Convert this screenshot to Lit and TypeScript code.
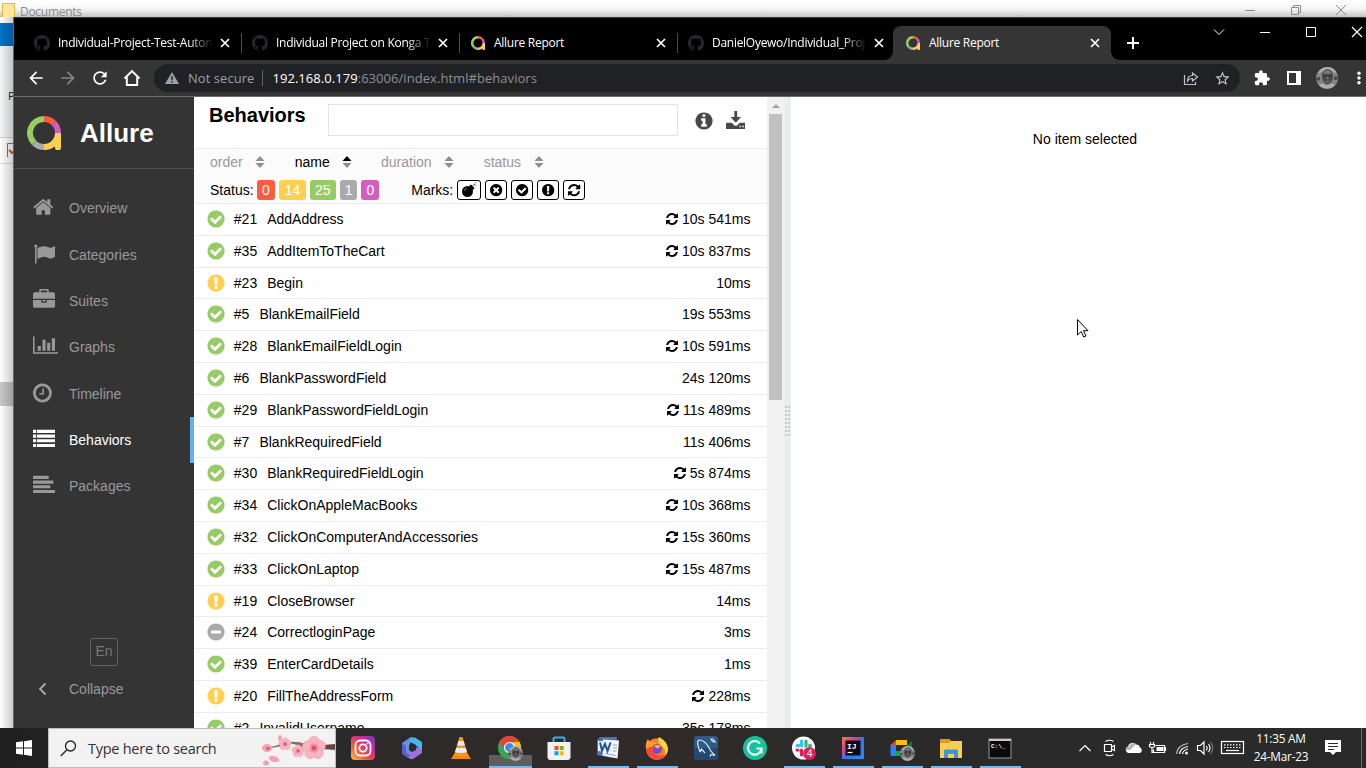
import { LitElement, html, svg, css, nothing } from "lit";
import { customElement } from "lit/decorators.js";
import { classMap } from "lit/directives/class-map.js";

const DISC =
  "M896 128q209 0 385.5 103t279.5 279.5 103 385.5-103 385.5-279.5 279.5-385.5 103-385.5-103-279.5-279.5-103-385.5 103-385.5 279.5-279.5 385.5-103z";

const glyphs: Record<string, string> = {
  home: "M1472 992v480q0 26-19 45t-45 19h-384v-384h-256v384h-384q-26 0-45-19t-19-45v-480q0-1 .5-3t.5-3l575-474 575 474q1 2 1 6zm223-69l-62 74q-8 9-21 11h-3q-13 0-21-7l-692-577-692 577q-12 8-24 7-13-2-21-11l-62-74q-8-10-7-23.5t11-21.5l719-599q32-26 76-26t76 26l244 204v-195q0-14 9-23t23-9h192q14 0 23 9t9 23v408l219 182q10 8 11 21.5t-7 23.5z",
  flag: "M320 256q0 72-64 110v1266q0 13-9.5 22.5t-22.5 9.5h-64q-13 0-22.5-9.5t-9.5-22.5v-1266q-64-38-64-110 0-53 37.5-90.5t90.5-37.5 90.5 37.5 37.5 90.5zm1472 64v763q0 25-12.5 38.5t-39.5 27.5q-215 116-369 116-61 0-123.5-22t-108.5-48-115.5-48-142.5-22q-192 0-464 146-17 9-33 9-26 0-45-19t-19-45v-742q0-32 31-55 21-14 79-43 236-120 421-120 107 0 200 29t219 88q38 19 88 19 54 0 117.5-21t110-47 88-47 54.5-21q26 0 45 19t19 45z",
  briefcase:
    "M640 256h512v-128h-512v128zm1152 640v480q0 66-47 113t-113 47h-1472q-66 0-113-47t-47-113v-480h672v160q0 26 19 45t45 19h320q26 0 45-19t19-45v-160h672zm-768 0v128h-256v-128h256zm768-480v384h-1792v-384q0-66 47-113t113-47h352v-160q0-40 28-68t68-28h576q40 0 68 28t28 68v160h352q66 0 113 47t47 113z",
  chart:
    "M0 128h128v1280h1920v128h-2048zM640 896v384h-256v-384zM1024 384v896h-256v-896zM1408 640v640h-256v-640zM1792 256v1024h-256v-1024z",
  clock:
    "M1024 544v448q0 14-9 23t-23 9h-320q-14 0-23-9t-9-23v-64q0-14 9-23t23-9h224v-352q0-14 9-23t23-9h64q14 0 23 9t9 23zm416 352q0-148-73-273t-198-198-273-73-273 73-198 198-73 273 73 273 198 198 273 73 273-73 198-198 73-273zm224 0q0 209-103 385.5t-279.5 279.5-385.5 103-385.5-103-279.5-279.5-103-385.5 103-385.5 279.5-279.5 385.5-103 385.5 103 279.5 279.5 103 385.5z",
  list: "M0 144h256v256h-256zM320 144h1472v256h-1472zM0 528h256v256h-256zM320 528h1472v256h-1472zM0 912h256v256h-256zM320 912h1472v256h-1472zM0 1296h256v256h-256zM320 1296h1472v256h-1472z",
  align:
    "M30 144h1220q30 0 30 30v196q0 30-30 30h-1220q-30 0-30-30v-196q0-30 30-30zM30 528h1600q30 0 30 30v196q0 30-30 30h-1600q-30 0-30-30v-196q0-30 30-30zM30 912h1350q30 0 30 30v196q0 30-30 30h-1350q-30 0-30-30v-196q0-30 30-30zM30 1296h1730q30 0 30 30v196q0 30-30 30h-1730q-30 0-30-30v-196q0-30 30-30z",
  check:
    "M1412 734q0-28-18-46l-91-90q-19-19-45-19t-45 19l-408 407-226-226q-19-19-45-19t-45 19l-91 90q-18 18-18 46 0 27 18 45l362 362q19 19 45 19 27 0 46-19l543-543q18-18 18-45z" +
    DISC,
  warn:
    DISC +
    "m128 1247v-190q0-14-9-23.5t-22-9.5h-192q-13 0-23 10t-10 23v190q0 13 10 23t23 10h192q13 0 22-9.5t9-23.5zm-2-344l18-621q0-12-10-18-10-8-24-8h-220q-14 0-24 8-10 6-10 18l17 621q0 10 10 17.5t24 7.5h185q14 0 23.5-7.5t10.5-17.5z",
  minus: DISC + "M512 768q-64 0-64 64v128q0 64 64 64h768q64 0 64-64v-128q0-64-64-64z",
  times:
    "M1277 1122q0-26-19-45l-181-181 181-181q19-19 19-45 0-27-19-46l-90-90q-19-19-46-19-26 0-45 19l-181 181-181-181q-19-19-45-19-27 0-46 19l-90 90q-19 19-19 46 0 26 19 45l181 181-181 181q-19 19-19 45 0 27 19 46l90 90q19 19 46 19 26 0 45-19l181-181 181 181q19 19 45 19 27 0 46-19l90-90q19-19 19-46z" +
    DISC,
  info:
    "M1152 1376v-160q0-14-9-23t-23-9h-96v-512q0-14-9-23t-23-9h-320q-14 0-23 9t-9 23v160q0 14 9 23t23 9h96v320h-96q-14 0-23 9t-9 23v160q0 14 9 23t23 9h448q14 0 23-9t9-23zm-128-896v-160q0-14-9-23t-23-9h-192q-14 0-23 9t-9 23v160q0 14 9 23t23 9h192q14 0 23-9t9-23z" +
    DISC,
  retry:
    "M1639 1056q0 5-1 7-64 268-268 434.5t-478 166.5q-146 0-282.5-55t-243.5-157l-129 129q-19 19-45 19t-45-19-19-45v-448q0-26 19-45t45-19h448q26 0 45 19t19 45-19 45l-137 137q71 66 161 102t187 36q134 0 250-65t186-179q11-17 53-117 8-23 30-23h192q13 0 22.5 9.5t9.5 22.5zm25-800v448q0 26-19 45t-45 19h-448q-26 0-45-19t-19-45 19-45l138-138q-148-137-349-137-134 0-250 65t-186 179q-11 17-53 117-8 23-30 23h-199q-13 0-22.5-9.5t-9.5-22.5v-7q65-268 270-434.5t480-166.5q146 0 284 55.5t245 156.5l130-129q19-19 45-19t45 19 19 45z",
  download:
    "M768 0h256v560h300q50 0 15 45l-400 420q-43 40-86 0l-400-420q-35-45 15-45h300zM64 1090h460l230 210q142 110 284 0l230-210h460q64 0 64 64v446q0 64-64 64h-1664q-64 0-64-64v-446q0-64 64-64zM1240 1360v130h130v-130zM1500 1360v130h130v-130z",
};

const fa = (name: string, size: number, w = 1792, x = 0) =>
  html`<svg width=${(size * w) / 1792} height=${size} viewBox="${x} 0 ${w} 1792">
    <path fill="currentColor" fill-rule="evenodd" d=${glyphs[name]}></path>
  </svg>`;

const allureLogo = (size: number) => html`<svg width=${size} height=${size} viewBox="0 0 34 34" fill="none" stroke-width="6">
  <path stroke="#97cc64" d="M7.1 26.9A14 14 0 0 1 17 3"></path>
  <path stroke="#fd5a3e" d="M17 3A14 14 0 0 1 26.9 7.1"></path>
  <path stroke="#d35ebe" d="M26.9 7.1A14 14 0 0 1 31 17"></path>
  <path stroke="#aaa" d="M17 31A14 14 0 0 1 7.1 26.9"></path>
  <path fill="#ffd050" stroke="none" d="M28 17h6v14.500a2.500 2.500 0 0 1-6 0v-1A17 17 0 0 1 17 34v-6A11 11 0 0 0 28 17z"></path>
</svg>`;

const githubMark = html`<svg width="16" height="16" viewBox="0 0 16 16"><path fill="#24292f" d="M8 0C3.58 0 0 3.58 0 8c0 3.54 2.29 6.53 5.47 7.59.4.07.55-.17.55-.38 0-.19-.01-.82-.01-1.49-2.01.37-2.53-.49-2.69-.94-.09-.23-.48-.94-.82-1.13-.28-.15-.68-.52-.01-.53.63-.01 1.08.58 1.23.82.72 1.21 1.87.87 2.33.66.07-.52.28-.87.51-1.07-1.78-.2-3.64-.89-3.64-3.95 0-.87.31-1.59.82-2.15-.08-.2-.36-1.02.08-2.12 0 0 .67-.21 2.2.82.64-.18 1.32-.27 2-.27.68 0 1.36.09 2 .27 1.53-1.04 2.2-.82 2.2-.82.44 1.1.16 1.92.08 2.12.51.56.82 1.27.82 2.15 0 3.07-1.87 3.75-3.65 3.95.29.25.54.73.54 1.48 0 1.07-.01 1.93-.01 2.2 0 .21.15.46.55.38A8.013 8.013 0 0016 8c0-4.42-3.58-8-8-8z"></path></svg>`;

/* Monochrome portrait, drawn in a 22-unit circle. */
const face = (x: number, y: number, d: number) => svg`<svg x=${x} y=${y} width=${d} height=${d} viewBox="0 0 22 22">
  <circle cx="11" cy="11" r="11" fill="#858585"></circle>
  <path d="M2 6Q6 0 12 0q7 1 9 7l-3-2-3-2-7 0-4 3z" fill="#b5b5b5"></path>
  <ellipse cx="11.500" cy="9.500" rx="5.500" ry="7.500" fill="#4a4a4a"></ellipse>
  <path d="M8 4.500q3-3 7 0v2.500H8z" fill="#777"></path>
  <path d="M8 8.500h3v1H8zM12.500 8.500h3v1h-3z" fill="#222"></path>
  <path d="M10.500 10h2v2h-2zM9.500 14h4v1h-4z" fill="#777"></path>
  <path d="M3 18q4-3 8 1 4-4 8-1a11 11 0 0 1-16 0z" fill="#b0b0b0"></path>
  <path d="M0 11l4-1v3l-3 1zM18 9l4 1-1 3-3 0z" fill="#4a4a4a"></path>
</svg>`;

const mat = (d: string, size = 20, fill = "#fff") =>
  html`<svg width=${size} height=${size} viewBox="0 0 24 24"><path fill=${fill} d=${d}></path></svg>`;

const tabs = [
  { title: "Individual-Project-Test-Auton", icon: "gh" },
  { title: "Individual Project on Konga T", icon: "gh" },
  { title: "Allure Report", icon: "al" },
  { title: "DanielOyewo/Individual_Proj", icon: "gh" },
  { title: "Allure Report", icon: "al", active: true },
];

@customElement("browser-chrome")
class BrowserChrome extends LitElement {
  static styles = css`
    :host { display: block; font-family: "Open Sans", "Noto Sans", sans-serif; }
    svg { display: block; flex: none; }
    .strip { height: 43px; background: #000; display: flex; padding: 8px 0 0 10px; box-sizing: border-box; border-top: 1px solid #3b3b3b; }
    .tab { width: 218px; flex: none; box-sizing: border-box; padding: 0 9px 0 10px; display: flex; align-items: center; gap: 8px; color: #fff; position: relative; border-right: 1px solid transparent; }
    .tab.line::after { content: ""; position: absolute; right: -1px; top: 7px; height: 20px; width: 1px; background: #4b4b4b; }
    .tab.active { background: #353535; border-radius: 8px 8px 0 0; margin-left: -3px; padding: 0 8px 0 12px; }
    .tab.active::before, .tab.active::after { content: ""; position: absolute; bottom: 0; width: 8px; height: 8px; }
    .tab.active::before { left: -8px; background: radial-gradient(circle at 0 0, transparent 7.5px, #353535 8px); }
    .tab.active::after { right: -9px; background: radial-gradient(circle at 100% 0, transparent 7.5px, #353535 8px); }
    .title { flex: 1; min-width: 0; font-size: 12px; letter-spacing: -0.28px; white-space: nowrap; line-height: 20px; margin-right: -3px; }
    .title.fade { -webkit-mask-image: linear-gradient(90deg, #000 84%, transparent); mask-image: linear-gradient(90deg, #000 84%, transparent); }
    .plus { padding: 10px 0 0 15px; }
    .win { margin-left: auto; display: flex; gap: 34px; padding: 0 3px 0 0; }
    .bar { height: 36px; background: #353535; display: flex; align-items: center; padding-left: 12px; box-sizing: border-box; }
    .nav { display: flex; gap: 12px; }
    .omni { width: 1086px; flex: none; height: 28px; border-radius: 14px; background: #202124; margin-left: 12px; box-sizing: border-box; padding: 0 9px 0 11px; display: flex; align-items: center; color: #9aa0a6; font-size: 13px; white-space: nowrap; }
    .secure { margin-left: 9px; letter-spacing: 0.05px; }
    .sep { width: 1px; height: 16px; background: #5f6368; margin: 0 9px 0 8px; }
    .host { color: #fff; }
    .url { letter-spacing: 0.05px; flex: 1; color: #8c8f93; }
    .acts { display: flex; gap: 14px; align-items: center; }
    .right { display: flex; gap: 12px; align-items: center; padding-left: 12px; margin-right: -4px; }
    .edge { height: 1px; background: #6a6a6a; }
  `;
  render() {
    return html`
      <div class="strip">
        ${tabs.map(
          (t, i) => html`<div class=${classMap({ tab: true, active: !!t.active, line: i < 3 })}>
            ${t.icon === "gh" ? githubMark : html`<svg width="16" height="16" viewBox="0 0 16 16"><svg x="1" y="1" width="14" height="14">${allureLogo(14)}</svg></svg>`}
            <span class=${classMap({ title: true, fade: t.icon === "gh" })}>${t.title}</span>
            <svg width="14" height="14" viewBox="0 0 14 14"><path d="M3 3l8 8M11 3l-8 8" stroke="#fff" stroke-width="1.700"></path></svg>
          </div>`
        )}
        <div class="plus"><svg width="14" height="14" viewBox="0 0 14 14"><path d="M7 1v12M1 7h12" stroke="#fff" stroke-width="2"></path></svg></div>
        <div class="win">
          <svg width="12" height="12" viewBox="0 0 12 12"><path d="M1 3.500l5 5 5-5" stroke="#fff" fill="none"></path></svg>
          <svg width="12" height="12" viewBox="0 0 12 12"><path d="M1 6.500h10" stroke="#fff"></path></svg>
          <svg width="12" height="12" viewBox="0 0 12 12"><path d="M1.500 1.500h9v9h-9z" stroke="#fff" fill="none"></path></svg>
          <svg width="12" height="12" viewBox="0 0 12 12"><path d="M1 1l10 10M11 1L1 11" stroke="#fff" stroke-width="1.200"></path></svg>
        </div>
      </div>
      <div class="bar">
        <div class="nav">
          ${mat("M20 11H7.83l5.59-5.59L12 4l-8 8 8 8 1.41-1.41L7.83 13H20v-2z")}
          ${mat("M4 11h12.170l-5.590-5.590L12 4l8 8-8 8-1.410-1.410L16.170 13H4v-2z", 20, "#858585")}
          ${mat("M17.65 6.35C16.2 4.9 14.21 4 12 4c-4.42 0-7.99 3.58-7.99 8s3.57 8 7.99 8c3.73 0 6.84-2.55 7.73-6h-2.08c-.82 2.33-3.04 4-5.65 4-3.31 0-6-2.69-6-6s2.69-6 6-6c1.66 0 3.14.69 4.22 1.78L13 11h7V4l-2.35 2.35z")}
          <svg width="20" height="20" viewBox="0 0 20 20"><path d="M2.500 10.500L10 3l7.500 7.500M4.800 9v8h10.400V9" stroke="#fff" stroke-width="1.900" fill="none"></path></svg>
        </div>
        <div class="omni">
          <svg width="14" height="14" viewBox="0 0 14 14"><path fill="#9aa0a6" fill-rule="evenodd" d="M7 1l7 12H0zM6.300 5v4h1.400V5zM6.300 10v1.500h1.400V10z"></path></svg>
          <span class="secure">Not secure</span><span class="sep"></span>
          <span class="url"><span class="host">192.168.0.179</span>:63006/index.html#behaviors</span>
          <div class="acts">
            <svg width="18" height="18" viewBox="0 0 18 18" fill="none" stroke="#bdc1c6" stroke-width="1.200"><path d="M2.500 6v9.500h11V13M5.500 12q0-5.500 5-5.500V4l5 4-5 4V9.500q-3.500 0-5 2.500z"></path></svg>
            ${mat("M22 9.24l-7.19-.62L12 2 9.19 8.63 2 9.24l5.46 4.73L5.82 21 12 17.27 18.18 21l-1.63-7.03L22 9.24zM12 15.4l-3.76 2.27 1-4.28-3.32-2.88 4.38-.38L12 6.1l1.71 4.04 4.38.38-3.32 2.88 1 4.28L12 15.4z", 17, "#c4c7ca")}
          </div>
        </div>
        <div class="right">
          <svg width="20" height="20" viewBox="-2 -2 28 28"><path fill="#fff" d="M20.5 11H19V7c0-1.1-.9-2-2-2h-4V3.5C13 2.12 11.88 1 10.5 1S8 2.12 8 3.5V5H4c-1.1 0-1.99.9-1.99 2v3.8H3.5c1.49 0 2.7 1.21 2.7 2.7s-1.21 2.7-2.7 2.7H2V20c0 1.1.9 2 2 2h3.8v-1.500c0-1.49 1.21-2.7 2.7-2.7 1.49 0 2.7 1.21 2.7 2.7V22H17c1.1 0 2-.9 2-2v-4h1.500c1.38 0 2.5-1.12 2.5-2.5S21.88 11 20.5 11z"></path></svg>
          <svg width="20" height="20" viewBox="0 0 20 20"><path fill="#fff" fill-rule="evenodd" d="M3 3h14v14H3zM5 5v10h7V5z"></path></svg>
          <svg width="22" height="22" viewBox="0 0 22 22">${face(0, 0, 22)}</svg>
          <svg width="18" height="20" viewBox="0 0 18 20" fill="#fff"><circle cx="9" cy="5.200" r="1.700"></circle><circle cx="9" cy="10" r="1.700"></circle><circle cx="9" cy="14.800" r="1.700"></circle></svg>
        </div>
      </div>
      <div class="edge"></div>
    `;
  }
}

/* icon, label, glyph width, glyph left edge */
const menu: [string, string, number, number][] = [
  ["home", "Overview", 1792, 60],
  ["flag", "Categories", 1792, -40],
  ["briefcase", "Suites", 1792, 0],
  ["chart", "Graphs", 2048, 0],
  ["clock", "Timeline", 1792, 128],
  ["list", "Behaviors", 1792, 0],
  ["align", "Packages", 1792, 0],
];

@customElement("side-nav")
class SideNav extends LitElement {
  static styles = css`
    :host { display: flex; flex-direction: column; width: 180px; flex: none; background: #343434; color: #999; font: 14px/20px "Liberation Sans", Arial, sans-serif; }
    svg { display: block; }
    .brand { display: flex; align-items: center; gap: 19px; height: 71px; padding-left: 13px; border-bottom: 1px solid #4f4f4f; color: #fff; font-size: 26px; font-weight: bold; margin-bottom: 16.300px; }
    .item { height: 46.300px; display: flex; align-items: center; padding-left: 19px; box-sizing: border-box; }
    .ico { width: 36px; margin-top: -2px; }
    .item.on { color: #fff; border-right: 4px solid #61b0f4; }
    .foot { margin-top: auto; padding-bottom: 29px; }
    .lang { width: 26px; height: 26px; border: 1px solid #616161; border-radius: 3px; margin: 0 0 13px 76px; text-align: center; line-height: 25px; color: #777; }
    .collapse { display: flex; align-items: center; padding-left: 24px; }
    .collapse svg { margin-right: 22px; }
  `;
  render() {
    return html`
      <div class="brand">${allureLogo(34)}<span>Allure</span></div>
      ${menu.map(
        ([icon, label, w, x]) => html`<div class=${classMap({ item: true, on: label === "Behaviors" })}>
          <span class="ico">${fa(icon, 22, w, x)}</span><span>${label}</span>
        </div>`
      )}
      <div class="foot">
        <div class="lang">En</div>
        <div class="collapse"><svg width="9" height="14" viewBox="0 0 9 14"><path d="M7.500 1.500L2 7l5.500 5.500" stroke="#aaa" stroke-width="1.800" fill="none"></path></svg><span>Collapse</span></div>
      </div>
    `;
  }
}

type Row = [string, number, string, boolean, string];
const rows: Row[] = [
  ["check", 21, "AddAddress", true, "10s 541ms"],
  ["check", 35, "AddItemToTheCart", true, "10s 837ms"],
  ["warn", 23, "Begin", false, "10ms"],
  ["check", 5, "BlankEmailField", false, "19s 553ms"],
  ["check", 28, "BlankEmailFieldLogin", true, "10s 591ms"],
  ["check", 6, "BlankPasswordField", false, "24s 120ms"],
  ["check", 29, "BlankPasswordFieldLogin", true, "11s 489ms"],
  ["check", 7, "BlankRequiredField", false, "11s 406ms"],
  ["check", 30, "BlankRequiredFieldLogin", true, "5s 874ms"],
  ["check", 34, "ClickOnAppleMacBooks", true, "10s 368ms"],
  ["check", 32, "ClickOnComputerAndAccessories", true, "15s 360ms"],
  ["check", 33, "ClickOnLaptop", true, "15s 487ms"],
  ["warn", 19, "CloseBrowser", false, "14ms"],
  ["minus", 24, "CorrectloginPage", false, "3ms"],
  ["check", 39, "EnterCardDetails", false, "1ms"],
  ["warn", 20, "FillTheAddressForm", true, "228ms"],
  ["check", 2, "InvalidUsername", false, "35s 178ms"],
];

@customElement("behaviors-pane")
class BehaviorsPane extends LitElement {
  static styles = css`
    :host { display: flex; flex-direction: column; width: 573px; flex: none; overflow: hidden; background: #fff; color: #000; font: 14px/20px "Liberation Sans", Arial, sans-serif; }
    svg { display: block; flex: none; }
    .head { height: 51px; flex: none; display: flex; padding: 0 22px 0 15px; box-sizing: border-box; }
    h1 { margin: 7px 0 0; width: 119px; font-size: 20px; line-height: 23px; font-weight: bold; }
    .search { width: 350px; height: 32px; box-sizing: border-box; border: 1px solid #e3e3e3; margin-top: 7px; }
    .tools { display: flex; gap: 12px; margin-left: auto; padding-top: 14px; color: #484848; }
    .filters { flex: none; height: 56px; box-sizing: border-box; background: #fbfbfb; border: solid #ebeced; border-width: 1px 0; padding: 0 16px; }
    .sort { display: flex; height: 26px; align-items: center; color: #999; }
    .key { display: flex; align-items: center; gap: 12.500px; }
    .key.on { color: #000; }
    .line { display: flex; align-items: center; height: 30px; }
    .chip { color: #fff; border-radius: 3px; height: 20px; margin-left: 4px; padding: 0 5px; line-height: 20px; }
    .chip.failed { margin-left: 3.500px; }
    .chip.w { padding: 0 5.800px; }
    .failed { background: #fd5a3e; } .broken { background: #ffd050; } .passed { background: #97cc64; } .skipped { background: #aaa; } .unknown { background: #d35ebe; }
    .marks { margin: 0 0 0 32px; }
    .mark { height: 20px; width: 22px; box-sizing: border-box; border: 1.500px solid #000; border-radius: 3px; margin-left: 4px; display: flex; align-items: center; justify-content: center; background: #fff; }
    .mark.wide { width: 24px; margin-left: 3.500px; }
    .row { flex: none; height: 31.800px; box-sizing: border-box; border-bottom: 1px solid #ebeced; display: flex; align-items: center; padding: 0 16.500px 0.600px 12px; }
    .num { margin: 0 10px 0 7.800px; }
    .time { margin-left: auto; display: flex; align-items: center; gap: 3px; }
    .i-check { color: #97cc64; } .i-warn { color: #ffd050; } .i-minus { color: #aaa; }
  `;
  sortKey(label: string, width: string, on = false) {
    return html`<div class=${classMap({ key: true, on })} style="width:${width}">
      ${label}<svg width="10" height="12" viewBox="0 0 10 12"><path d="M0.500 5L5 0l4.500 5z" fill=${on ? "#000" : "#8f8f8f"}></path><path d="M0.500 7L5 12l4.500-5z" fill="#8f8f8f"></path></svg>
    </div>`;
  }
  render() {
    const bomb = html`<svg width="16" height="16" viewBox="0 0 16 16"><circle cx="6.500" cy="9.500" r="5.500"></circle><path d="M8 4l2-1.500 3.500 3.500L12 8z"></path><path d="M11.500 4.500l1.500-2 1.500-.5" stroke="#555" fill="none"></path><path d="M14 .5h1.500M14 3l1.500 1" stroke="#aaa"></path><path d="M3.500 9q.3-2.500 2.500-3" stroke="#999" fill="none" stroke-width=".8"></path></svg>`;
    return html`
      <div class="head">
        <h1>Behaviors</h1>
        <div class="search"></div>
        <div class="tools">${fa("info", 20)}${fa("download", 19.5)}</div>
      </div>
      <div class="filters">
        <div class="sort">
          ${this.sortKey("order", "84.700px")}${this.sortKey("name", "86.300px", true)}${this.sortKey("duration", "102.700px")}${this.sortKey("status", "64px")}
        </div>
        <div class="line">
          Status:<span class="chip failed">0</span><span class="chip w broken">14</span><span class="chip passed">25</span><span class="chip skipped">1</span><span class="chip unknown">0</span>
          <span class="marks">Marks:</span>
          <span class="mark wide">${bomb}</span>
          ${["times", "check", "warn", "retry"].map((n) => html`<span class="mark">${fa(n, 14.3)}</span>`)}
        </div>
      </div>
      ${rows.map(
        ([st, n, name, retry, time]) => html`<div class="row">
          <span class="i-${st}">${fa(st, 20)}</span>
          <span class="num">#${n}</span><span>${name}</span>
          <span class="time">${retry ? fa("retry", 14) : nothing}<span>${time}</span></span>
        </div>`
      )}
    `;
  }
}

const appIcons: Record<string, unknown> = {
  instagram: svg`<defs><linearGradient id="ig" x1="0" y1="1" x2="1" y2="0"><stop offset="0" stop-color="#fdc04a"></stop><stop offset=".35" stop-color="#f4573a"></stop><stop offset=".65" stop-color="#d22a8e"></stop><stop offset="1" stop-color="#6a3bd0"></stop></linearGradient></defs><rect width="24" height="24" rx="4" fill="url(#ig)"></rect><rect x="4.500" y="4.500" width="15" height="15" rx="4.500" fill="none" stroke="#fff" stroke-width="1.800"></rect><circle cx="12" cy="12" r="3.700" fill="none" stroke="#fff" stroke-width="1.800"></circle><circle cx="16.500" cy="7.500" r="1.100" fill="#fff"></circle>`,
  m365: svg`<path d="M2 7l8-5.500 5 .5-5 4v9l-5 4-3-2z" fill="#6c8ee8"></path><path d="M10 1.500h5l7 4.500v8l-4 3V11l-8-5z" fill="#46b5ea"></path><path d="M2 17l8-2 8-4 4 3v3l-9 6h-3z" fill="#9a72d8"></path><path d="M2 7l4 3v7l4 2-2 3-6-4z" fill="#5660c0"></path><path d="M9 9l3-2 4 2v5l-4 2-3-2z" fill="#2b2b2b"></path>`,
  vlc: svg`<path d="M5 18h14l3 5H2z" fill="#f08a12"></path><path d="M10.500 1h3l5.500 18q-7 3.500-14 0z" fill="#f79420"></path><path d="M9.400 5h5.200l1.200 4q-4 1.500-7.600 0zM7.300 12h9.400l1.300 4q-6 2-12 0z" fill="#ececec"></path>`,
  chrome: svg`<circle cx="11.500" cy="11.500" r="11.500" fill="#34a853"></circle><path d="M1.500 5.800A11.500 11.500 0 0 1 21.500 6H11.500L6.500 14z" fill="#ea4335"></path><path d="M21.500 6a11.500 11.500 0 0 1-10 17l5-9-2-8z" fill="#fbc116"></path><circle cx="11.500" cy="11.500" r="5.500" fill="#fff"></circle><circle cx="11.500" cy="11.500" r="4.400" fill="#4285f4"></circle>${face(10, 10, 15)}`,
  store: svg`<path d="M6.500 7V3q0-1.500 1.500-1.500h8q1.500 0 1.500 1.500v4" fill="none" stroke="#30b4ea" stroke-width="2"></path><path d="M.5 6h23v15q0 3-3 3h-17q-3 0-3-3z" fill="#f2f2f2"></path><path d="M7.500 10h4v4h-4z" fill="#f25022"></path><path d="M12.700 10h4v4h-4z" fill="#7fba00"></path><path d="M7.500 15.200h4v4h-4z" fill="#00a4ef"></path><path d="M12.700 15.200h4v4h-4z" fill="#ffb900"></path>`,
  word: svg`<path d="M1 4l3-3h17l-2 18-3 3-15-3z" fill="#4a72b8"></path><path d="M7 3.500l16 1-1.500 18-15-3z" fill="#f3f6fb"></path><path d="M17 9h4M17 12h4M17 15h3.500M9 17.500l11 2" stroke="#8aa4d0"></path><path d="M2 5h14v12l-14-2z" fill="#e9eff9"></path><path d="M4 6.500l2 8 3-6.500 2.500 7 3-8.500" stroke="#244f9c" stroke-width="2" fill="none"></path>`,
  firefox: svg`<circle cx="12" cy="13" r="10.800" fill="#ff7a26"></circle><path d="M14 1q8 4 9 12a11 11 0 0 1-4 8q3-9-4-12-3-4-1-8z" fill="#ffd43c"></path><path d="M1 13q-1-6 2-10 1 3 4 3 4-1 5 2l-2 2z" fill="#ff9a2e"></path><circle cx="12" cy="13" r="5" fill="#7548d0"></circle><path d="M1.500 13q1 9 10 10.800 7-.3 10-5.800-8 4-13-1-2-4 2-5-4-3-9 1z" fill="#f5473c"></path><path d="M9 10q4-3 7 1-3-.5-3 2z" fill="#ffb52e"></path>`,
  mysql: svg`<rect width="24" height="24" rx="3" fill="#2c5c85"></rect><path d="M0 12h24v9q0 3-3 3H3q-3 0-3-3z" fill="#234a6e"></path><path d="M6 16Q2 5 5 4q5 0 9 6 2 5 7 9.500l-4-1-1 2M6 16l1.500-3 3.500 4M17 3l1.500 2.500L21 6l-2-3z" stroke="#dbe8f2" stroke-width="1.200" fill="none"></path>`,
  grammarly: svg`<circle cx="12" cy="12" r="12" fill="#15c39a"></circle><path d="M17 7.500a6.800 6.800 0 1 0 1.500 5h-5M15.500 16.500l3-.3v-3.500" stroke="#fff" stroke-width="2.200" fill="none"></path>`,
  slack: svg`<circle cx="11.500" cy="12" r="11.500" fill="#fff"></circle><g stroke-width="3.200" stroke-linecap="round"><path d="M9.500 5v4.500H5" stroke="#36c5f0" fill="none"></path><path d="M14 5v5M18.500 9.500h-1" stroke="#2eb67d"></path><path d="M9.500 14v5M5 14h1" stroke="#e01e5a"></path><path d="M14 14h4" stroke="#ecb22e"></path></g><circle cx="17.500" cy="17.500" r="6.500" fill="#e01e5a"></circle><text x="17.500" y="21.200" font-size="10" fill="#fff" text-anchor="middle" font-family="Open Sans, sans-serif">4</text>`,
  idea: svg`<defs><linearGradient id="ij" x1="0" y1="0" x2="1" y2="1"><stop offset="0" stop-color="#f97a3a"></stop><stop offset=".35" stop-color="#d0409c"></stop><stop offset=".55" stop-color="#2b7be8"></stop><stop offset="1" stop-color="#2a8af5"></stop></linearGradient></defs><rect x="1" y="1" width="22" height="22" fill="url(#ij)"></rect><rect x="4.500" y="4.500" width="15" height="15" fill="#130713"></rect><text x="6" y="12.500" font-size="8" font-weight="bold" fill="#fff" font-family="Liberation Mono, monospace">IJ</text><path d="M6.500 16.500h5" stroke="#fff" stroke-width="1.200"></path>`,
  meet: svg`<path d="M6 4h11v5H6z" fill="#fbbc04"></path><path d="M6 4v5H.5z" fill="#ea4335"></path><path d="M.5 9H6v11H2q-1.500 0-1.500-1.500z" fill="#2684fc"></path><path d="M6 15h11v5H6z" fill="#00ac47"></path><path d="M15 11l7-6v15l-7-5z" fill="#00832d"></path>${face(10, 10, 15)}`,
  files: svg`<path d="M1 3h9l2 2h11v17H1z" fill="#f8cf53"></path><path d="M1 3h9l2 2-2 2H1z" fill="#dd9a1f"></path><path d="M5 22v-7q0-1.500 1.500-1.500h11q1.500 0 1.500 1.500v7h-4v-4H9v4z" fill="#3d94dc"></path>`,
  cmd: svg`<rect x="1" y="3" width="22" height="19" fill="#0a0a0a" stroke="#9a9a9a"></rect><path d="M1 3h22v2H1z" fill="#c8c8c8"></path><text x="3" y="12" font-size="6" font-weight="bold" fill="#fff" font-family="Liberation Mono, monospace">C:\\_</text>`,
};

const apps: [string, boolean][] = [
  ["instagram", false], ["m365", false], ["vlc", false], ["chrome", true], ["store", false], ["word", true], ["firefox", true],
  ["mysql", false], ["grammarly", false], ["slack", true], ["idea", true], ["meet", true], ["files", true], ["cmd", true],
];

const flower = (x: number, y: number, r: number) =>
  svg`<g transform="translate(${x} ${y}) scale(${r})">${[0, 72, 144, 216, 288].map(
    (a) => svg`<ellipse cx="0" cy="-.54" rx=".44" ry=".44" fill="#f8b4bf" stroke="#f09dad" stroke-width=".05" transform="rotate(${a})"></ellipse>`
  )}<circle r=".38" fill="#f08ca0"></circle><circle r=".18" fill="#dc4a68"></circle></g>`;

@customElement("task-bar")
class TaskBar extends LitElement {
  static styles = css`
    :host { display: flex; height: 40px; background: linear-gradient(90deg, #202020, #2b2a2a 25%, #302b29 50%, #2a2a2a 60%, #2a2a2a); color: #fff; font-family: "Open Sans", "Noto Sans", sans-serif; }
    svg { display: block; flex: none; }
    .start { width: 48px; display: flex; align-items: center; justify-content: center; }
    .search { width: 288px; box-sizing: border-box; border: 1px solid #bdbdbd; background: #f2f2f2; color: #333; display: flex; align-items: center; padding-left: 11px; font-size: 14.500px; letter-spacing: -0.26px; white-space: nowrap; }
    .search span { flex: 1; margin-left: 11px; }
    .apps { display: flex; margin-left: 2.500px; }
    .app { width: 49px; height: 40px; display: flex; justify-content: center; align-items: center; box-sizing: border-box; border: solid transparent; border-width: 0 4.500px; }
    .app.run { background: linear-gradient(#76b9ed, #76b9ed) 0 100% / 100% 2px no-repeat; background-clip: padding-box; }
    .app.front { border-width: 0 3.500px; background: linear-gradient(#76b9ed, #76b9ed) 0 100% / 100% 2px no-repeat, linear-gradient(#5e5e5e, #5e5e5e) 0 100% / 100% 13px no-repeat; background-clip: padding-box; }
    .tray { margin-left: auto; display: flex; align-items: center; }
    .clock { width: 66px; margin: 0 11px 0 -1.500px; text-align: center; font-size: 11.800px; line-height: 18.500px; letter-spacing: -0.22px; padding-bottom: 2px; white-space: nowrap; }
    .peek { width: 1px; height: 40px; background: #6a6a6a; margin: 0 4px 0 20px; }
  `;
  render() {
    return html`
      <div class="start"><svg width="16" height="16" viewBox="0 0 16 16" fill="#fff"><path d="M0 2.300L7 1.300V7.500H0zM8 1.200L16 0v7.500H8zM0 8.500h7v6.200L0 13.700zM8 8.500h8V16l-8-1.200z"></path></svg></div>
      <div class="search">
        <svg width="17" height="17" viewBox="0 0 17 17" fill="none" stroke="#222" stroke-width="1.300"><circle cx="10.500" cy="6" r="5"></circle><path d="M7 9.800L.7 16"></path></svg>
        <span>Type here to search</span>
        <svg width="74" height="36" viewBox="0 0 74 36">
          <path d="M8 17q8-1 14-4l5-1q12-1 20 3l16 1v4q-14 1-24-4-8-3-12-2-8 3-19 4z" fill="#8b6a61"></path>
          <path d="M62 15l12-1v6l-12-1z" fill="#63473f"></path>
          <ellipse cx="6" cy="18" rx="5" ry="4" fill="#f2a3b1"></ellipse><circle cx="7" cy="18.500" r="1.800" fill="#d95f79"></circle>
          <ellipse cx="19" cy="8" rx="2" ry="3" fill="#f2a3b1"></ellipse>
          ${flower(24, 14, 6.5)}${flower(37, 21, 6.5)}${flower(53, 18, 12)}
          <ellipse cx="5" cy="33" rx="3" ry="2.500" fill="#f2a3b1"></ellipse><ellipse cx="13" cy="29" rx="5.500" ry="2.800" fill="#f2a3b1" transform="rotate(15 13 29)"></ellipse>
        </svg>
      </div>
      <div class="apps">
        ${apps.map(
          ([id, run]) => html`<div class=${classMap({ app: true, run, front: id === "chrome" })}><svg width="25" height="25" viewBox="0 0 25 25">${appIcons[id]}</svg></div>`
        )}
      </div>
      <div class="tray">
        <svg width="174" height="40" viewBox="0 0 174 40" fill="none" stroke="#fff" stroke-width="1.200">
          <path d="M3.500 23l5.500-5.500 5.500 5.500"></path>
          <path d="M28.500 16.500h7v7h-7zM35.500 19l3-1.500v5l-3-1.500M29.500 13.500q4-2.500 8 0M29.500 26.500q4 2.500 8 0"></path>
          <path d="M52 25a3.500 3.500 0 0 1 0-6.500 4.500 4.500 0 0 1 8-2 4 4 0 0 1 4 3 3 3 0 0 1 0 5.500z" fill="#fff" stroke="none"></path>
          <path d="M49.500 22q0-3 3.500-3.500a4.500 4.500 0 0 1 7-2.500l-6 6z" fill="#b5b5b5" stroke="none"></path>
          <path d="M79.500 17.500h9v7h-11v-3M89.500 19v4M73.500 16.500h5v2q-2.500 2-5 0zM74.500 14v2.500M77.500 14v2.500M76 19.500v5h2"></path>
          <path d="M80.500 19h7v4h-7z" fill="#fff" stroke="none"></path>
          <path d="M100.500 26q1-9 11.500-10.500" stroke="#bbb"></path><path d="M103.500 26q1-6.500 8.500-7.500M106.500 26q.5-4 5.500-5"></path><circle cx="110.500" cy="25" r="1.500" fill="#fff" stroke="none"></circle>
          <path d="M121.500 17.500h3l3.500-3.500v12l-3.500-3.500h-3zM130.500 18q1.500 2 0 4.500M132.500 16q3 4 0 8"></path><path d="M134.500 14q4.500 6 0 12" stroke="#777"></path>
          <rect x="145.500" y="13.500" width="22" height="12"></rect><path d="M148 16.800h17.500M148 19.500h17.500" stroke-dasharray="1.500 1.500"></path><path d="M150 22.500h13"></path>
        </svg>
        <div class="clock">11:35 AM<br />24-Mar-23</div>
        <svg width="16" height="40" viewBox="0 0 16 40"><path d="M0 12h16v12h-5l-3 3-3-3H0z" fill="#fff"></path><path d="M3 15.500h10M3 18.500h10M3 21.500h6" stroke="#2a2a2a"></path></svg>
        <div class="peek"></div>
      </div>
    `;
  }
}

@customElement("app-root")
class AppRoot extends LitElement {
  static styles = css`
    :host { display: flex; flex-direction: column; width: 1366px; height: 768px; overflow: hidden; position: relative; background: #fff; font-family: "Liberation Sans", Arial, sans-serif; }
    svg { display: block; }
    .behind { height: 17px; flex: none; background: linear-gradient(#fff 20%, #f2f2f2 55%, #c4c4c4); display: flex; color: #8a8a8a; font: 12px/13px "Open Sans", "Noto Sans", sans-serif; letter-spacing: -0.28px; }
    .folder { width: 13px; height: 15px; box-sizing: border-box; background: #ffe79b; border: 1px solid #e6bb3b; margin: 3px 5px 0 2px; }
    .doc { padding-top: 6px; height: 11px; line-height: 11px; }
    .ctl { margin: 4px 19px 0 auto; display: flex; gap: 33.500px; }
    .mid { flex: 1; min-height: 0; display: flex; }
    .left { width: 13px; box-sizing: content-box; flex: none; display: flex; flex-direction: column; background: #fff; overflow: hidden; position: relative; border-right: 1px solid #666; font: 11px/14px "Open Sans", sans-serif; color: #222; }
    .left::after { content: ""; position: absolute; inset: 0; background: linear-gradient(90deg, transparent, rgba(0, 0, 0, 0.2)); }
    .blue { height: 23px; margin-top: 6px; background: #0173c7; flex: none; }
    .ribbon { height: 92px; flex: none; background: #f3f5f7; border-bottom: 1px solid #d4d4d4; padding-left: 8px; box-sizing: border-box; padding-top: 43px; }
    .tick { height: 26px; flex: none; border-bottom: 1px solid #ddd; box-sizing: border-box; padding: 5px 0 0 7px; }
    .sel { height: 24px; background: #c9c9c9; margin-top: 218px; flex: none; }
    .window { flex: 1; min-width: 0; display: flex; flex-direction: column; }
    .page { flex: 1; min-height: 0; display: flex; background: #fff; }
    .scroll { width: 17px; flex: none; background: #f1f1f1; display: flex; flex-direction: column; align-items: center; }
    .scroll svg { margin: 7px 0 6px; }
    .thumb { width: 13px; height: 286px; background: #c1c1c1; }
    .gutter { width: 7px; flex: none; background: #ebeef1; display: flex; align-items: center; justify-content: center; padding-top: 18px; box-sizing: border-box; }
    .empty { flex: 1; padding: 32px 0 0 13px; text-align: center; font-size: 14px; line-height: 20px; color: #000; }
    .cursor { position: absolute; left: 1076px; top: 318px; }
  `;
  render() {
    return html`
      <div class="behind">
        <span class="folder"></span><span class="doc">Documents</span>
        <div class="ctl">
          <svg width="12" height="12" viewBox="0 0 12 12"><path d="M1 6.500h10" stroke="#8a8a8a"></path></svg>
          <svg width="12" height="12" viewBox="0 0 12 12"><path d="M1.500 3.500h7v7h-7zM3.500 3.500v-2h7v7h-2" stroke="#8a8a8a" fill="none"></path></svg>
          <svg width="12" height="12" viewBox="0 0 12 12"><path d="M1 1l10 10M11 1L1 11" stroke="#8a8a8a"></path></svg>
        </div>
      </div>
      <div class="mid">
        <div class="left">
          <div class="blue"></div>
          <div class="ribbon">P</div>
          <div class="tick"><svg width="14" height="14" viewBox="0 0 14 14"><path d="M.5.5h13v14H.5z" stroke="#777" fill="#fff"></path><path d="M2 7l3 3 5-5" stroke="#d4501e" stroke-width="1.800" fill="none"></path></svg></div>
          <div class="sel"></div>
        </div>
        <div class="window">
          <browser-chrome></browser-chrome>
          <div class="page">
            <side-nav></side-nav>
            <behaviors-pane></behaviors-pane>
            <div class="scroll">
              <svg width="8" height="4" viewBox="0 0 8 4"><path d="M0 4l4-4 4 4z" fill="#a3a3a3"></path></svg>
              <div class="thumb"></div>
            </div>
            <div class="gutter">
              <svg width="5" height="31" viewBox="0 0 5 31">${[0, 1, 2, 3, 4, 5, 6, 7].map((i) => svg`<path d="M0 ${i * 4}h2v2h-2zM3 ${i * 4}h2v2h-2z" fill="#c6cace"></path>`)}</svg>
            </div>
            <div class="empty">No item selected</div>
          </div>
        </div>
      </div>
      <task-bar></task-bar>
      <svg class="cursor" width="13" height="20" viewBox="0 0 13 20"><path d="M1.500 1.500v15.500l3.700-3.500 2.500 5.500 2.300-1-2.500-5.300h4.500z" fill="#fff" stroke="#000"></path></svg>
    `;
  }
}
